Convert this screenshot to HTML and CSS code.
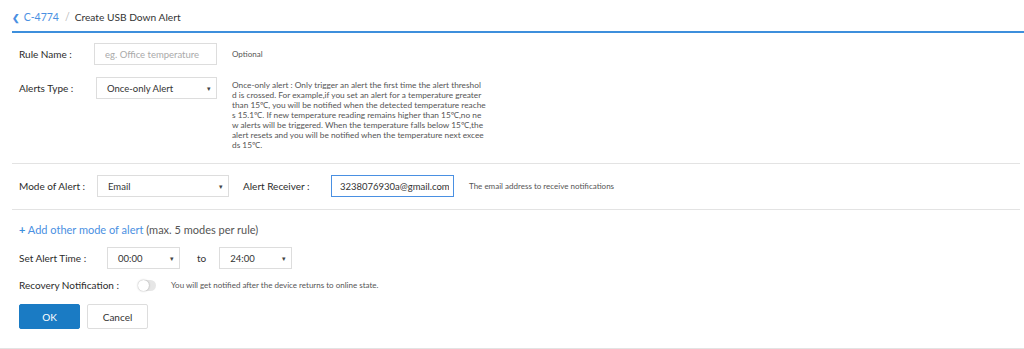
FILE: index.html
```html
<!DOCTYPE html>
<html lang="en">
<head>
    <meta charset="UTF-8">
    <title>Create USB Down Alert</title>
    <link rel="stylesheet" href="styles.css">
</head>
<body>
    <!-- Breadcrumb -->
    <div class="header">
        <a href="#" class="back"><span class="chev">&#10094;</span> C-4774</a>
        <span class="sep">/</span>
        <span class="title">Create USB Down Alert</span>
    </div>

    <div class="form">
        <div class="block">
            <div class="row">
                <label class="label w-rule">Rule Name :</label>
                <input class="input" type="text" placeholder="eg. Office temperature">
                <span class="hint small">Optional</span>
            </div>
            <div class="row top">
                <label class="label w-type">Alerts Type :</label>
                <div class="select">Once-only Alert <span class="caret">&#9662;</span></div>
                <p class="desc">Once-only alert : Only trigger an alert the first time the alert threshol<br>d is crossed. For example,if you set an alert for a temperature greater<br>than 15℃, you will be notified when the detected temperature reache<br>s 15.1℃. If new temperature reading remains higher than 15℃,no ne<br>w alerts will be triggered. When the temperature falls below 15℃,the<br>alert resets and you will be notified when the temperature next excee<br>ds 15℃.</p>
            </div>
        </div>

        <div class="block mode">
            <div class="row">
                <label class="label w-mode">Mode of Alert :</label>
                <div class="select wide">Email <span class="caret">&#9662;</span></div>
                <label class="label w-recv">Alert Receiver :</label>
                <input class="input active" type="text" value="3238076930a@gmail.com">
                <span class="hint small">The email address to receive notifications</span>
            </div>
        </div>

        <div class="add"><span class="plus">+</span> <a href="#">Add other mode of alert</a> <span class="muted">(max. 5 modes per rule)</span></div>

        <div class="row">
            <label class="label w-time">Set Alert Time :</label>
            <div class="select time">00:00 <span class="caret">&#9662;</span></div>
            <span class="to">to</span>
            <div class="select time">24:00 <span class="caret">&#9662;</span></div>
        </div>

        <div class="row recovery">
            <label class="label w-rec">Recovery Notification :</label>
            <span class="toggle"><span class="knob"></span></span>
            <span class="hint small">You will get notified after the device returns to online state.</span>
        </div>

        <div class="actions">
            <button class="btn primary">OK</button>
            <button class="btn">Cancel</button>
        </div>
    </div>
    <div class="bottom"></div>
</body>
</html>
```
FILE: styles.css
```css
body {
    margin: 0;
    background-color: white;
    color: #333;
    font-family: Lato, "Noto Sans", sans-serif;
    font-size: 10px;
    height: 349px;
    overflow: hidden;
}
.header {
    margin-left: 12px;
    height: 33px;
    border-bottom: 2px solid #3d8fdc;
    display: flex;
    align-items: center;
    font-size: 10.5px;
    box-sizing: border-box;
    padding-top: 3px;
}
.back {
    color: #4a90e2;
    text-decoration: none;
}
.chev {
    font-size: 9px;
    font-weight: bold;
    margin-right: 1px;
}
.sep {
    color: #bbb;
    margin: 0 5px 0 6px;
}
.title {
    color: #333;
    font-size: 10.2px;
}
.form {
    padding: 0 4px 0 12px;
}
.block {
    border-bottom: 1px solid #e3e3e3;
    padding: 10px 0 13px 7px;
}
.block.mode {
    padding: 11px 0 12px 7px;
}
.row {
    display: flex;
    align-items: center;
}
.row.top {
    align-items: flex-start;
    margin-top: 12px;
}
.row.top .label {
    margin-top: 5px;
}
.label {
    color: #2b2b2b;
    font-size: 10px;
}
.w-rule { width: 75px; }
.w-type { width: 77px; }
.w-mode { width: 78px; }
.w-recv { width: 88px; margin-left: 14px; }
.w-time { width: 88px; }
.w-rec { width: 119px; }
.input {
    width: 123px;
    height: 22px;
    box-sizing: border-box;
    border: 1px solid #ddd;
    padding: 0 10px;
    font-family: inherit;
    font-size: 9.5px;
    color: #333;
}
.input::placeholder {
    color: #aaa;
}
.input.active {
    border-color: #4a90e2;
    padding: 0 4px 0 8px;
    font-size: 9.5px;
}
.hint {
    color: #555;
    margin-left: 15px;
}
.small {
    font-size: 8px;
}
.select {
    width: 121px;
    height: 22px;
    box-sizing: border-box;
    border: 1px solid #ddd;
    display: flex;
    align-items: center;
    justify-content: space-between;
    padding: 0 5px 0 10px;
    font-size: 9.5px;
    color: #333;
}
.select.wide {
    width: 132px;
}
.select.time {
    width: 73px;
}
.caret {
    font-size: 7px;
    color: #444;
}
.desc {
    margin: 3px 0 0 15px;
    font-size: 8.3px;
    line-height: 10px;
    color: #555;
    white-space: nowrap;
}
.add {
    padding: 13px 0 0 7px;
    font-size: 11px;
    color: #555;
    height: 24px;
}
.add a {
    color: #4a90e2;
    text-decoration: none;
}
.plus {
    color: #3d8fdc;
    font-weight: bold;
}
.muted {
    color: #555;
}
.row, .actions {
    margin-left: 7px;
}
.block .row {
    margin-left: 0;
}
.to {
    margin: 0 13px 0 17px;
}
.recovery {
    margin-top: 10px;
}
.toggle {
    width: 18px;
    height: 11px;
    border-radius: 6px;
    background-color: #e6e6e6;
    position: relative;
    display: inline-block;
}
.knob {
    position: absolute;
    left: 0;
    top: 0;
    width: 11px;
    height: 11px;
    border-radius: 50%;
    background-color: white;
    box-shadow: 0 0 2px rgba(0, 0, 0, 0.35);
}
.actions {
    display: flex;
    gap: 7px;
    margin-top: 13px;
}
.btn {
    width: 61px;
    height: 25px;
    border: 1px solid #ddd;
    background-color: white;
    font-family: inherit;
    font-size: 10px;
    color: #333;
    border-radius: 2px;
}
.btn.primary {
    background-color: #1a7bc4;
    border-color: #1a7bc4;
    color: white;
}
.bottom {
    margin-top: 19px;
    border-top: 1px solid #e3e3e3;
}
```
